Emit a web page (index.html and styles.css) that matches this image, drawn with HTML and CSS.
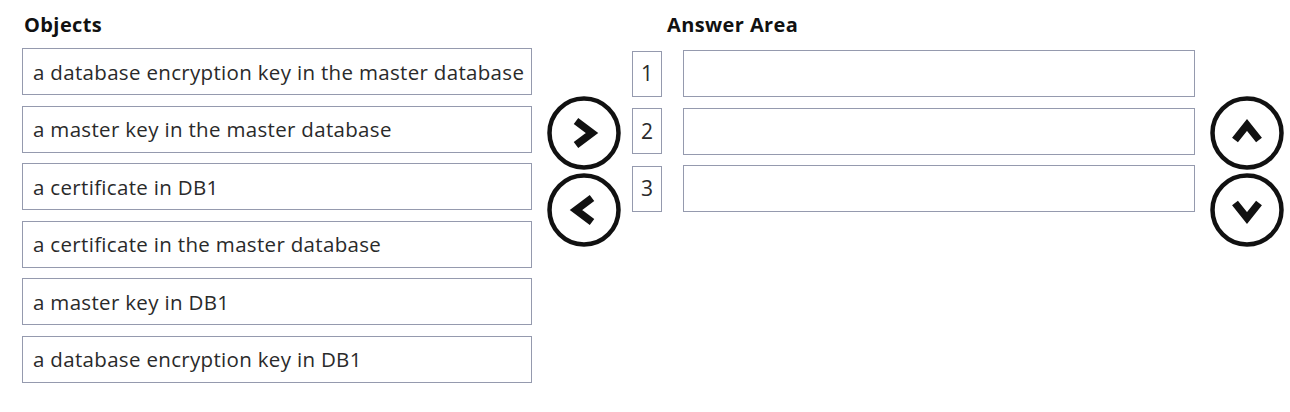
FILE: index.html
```html
<!DOCTYPE html>
<html lang="en">
<head>
<meta charset="utf-8">
<title>Answer Area</title>
<link rel="stylesheet" href="styles.css">
</head>
<body>
<div class="quiz">
  <section class="objects">
    <h2 class="title">Objects</h2>
    <ul class="list">
      <li class="item">a database encryption key in the master database</li>
      <li class="item">a master key in the master database</li>
      <li class="item">a certificate in DB1</li>
      <li class="item">a certificate in the master database</li>
      <li class="item">a master key in DB1</li>
      <li class="item">a database encryption key in DB1</li>
    </ul>
  </section>

  <div class="controls move">
    <button class="round" type="button" aria-label="Move right">
      <svg viewBox="0 0 74 74" width="74" height="74"><circle cx="37" cy="37" r="34.5"/><polyline points="29,25 45,37 29,49"/></svg>
    </button>
    <button class="round" type="button" aria-label="Move left">
      <svg viewBox="0 0 74 74" width="74" height="74"><circle cx="37" cy="37" r="34.5"/><polyline points="45,25 29,37 45,49"/></svg>
    </button>
  </div>

  <section class="answer">
    <h2 class="title answer-title">Answer Area</h2>
    <ol class="slots">
      <li class="slot"><span class="num">1</span><div class="field"></div></li>
      <li class="slot"><span class="num">2</span><div class="field"></div></li>
      <li class="slot"><span class="num">3</span><div class="field"></div></li>
    </ol>
  </section>

  <div class="controls order">
    <button class="round" type="button" aria-label="Move up">
      <svg viewBox="0 0 74 74" width="74" height="74"><circle cx="37" cy="37" r="34.5"/><polyline points="25,44 37,29 49,44"/></svg>
    </button>
    <button class="round" type="button" aria-label="Move down">
      <svg viewBox="0 0 74 74" width="74" height="74"><circle cx="37" cy="37" r="34.5"/><polyline points="25,30 37,45 49,30"/></svg>
    </button>
  </div>
</div>
</body>
</html>
```

FILE: styles.css
```css
html, body {
  margin: 0;
  padding: 0;
  background: #ffffff;
}

body {
  font-family: "Open Sans", "Noto Sans", "Liberation Sans", sans-serif;
  color: #262626;
}

.quiz {
  display: flex;
  align-items: flex-start;
  padding: 12px 0 0 22px;
}

.title {
  margin: 0 0 0 2px;
  height: 36px;
  font-size: 20px;
  line-height: 26px;
  font-weight: 700;
  color: #111111;
  letter-spacing: 0.4px;
}

/* left column: draggable items */
.objects {
  width: 510px;
}

.list {
  list-style: none;
  margin: 0;
  padding: 0;
  display: flex;
  flex-direction: column;
  gap: 10.5px;
}

.item {
  box-sizing: border-box;
  height: 47px;
  display: flex;
  align-items: center;
  padding: 0 0 0 10px;
  border: 1px solid #959aae;
  font-size: 20.5px;
  letter-spacing: 0.32px;
  color: #2a2a2a;
  white-space: nowrap;
}

/* round arrow buttons */
.controls {
  display: flex;
  flex-direction: column;
  gap: 3px;
  margin-top: 84px;
}

.move {
  margin-left: 15px;
}

.order {
  margin-left: 15px;
}

.round {
  display: block;
  width: 74px;
  height: 74px;
  padding: 0;
  border: 0;
  background: none;
}

.round svg {
  display: block;
}

.round circle {
  fill: #ffffff;
  stroke: #111111;
  stroke-width: 4.5;
}

.round polyline {
  fill: none;
  stroke: #111111;
  stroke-width: 7.5;
  stroke-linejoin: miter;
  stroke-linecap: butt;
}

/* right column: ordered answer slots */
.answer {
  margin-left: 11px;
}

.answer-title {
  margin-left: 35px;
}

.slots {
  list-style: none;
  margin: 2px 0 0;
  padding: 0;
  display: flex;
  flex-direction: column;
  gap: 10.5px;
}

.slot {
  display: flex;
  align-items: center;
  gap: 21px;
}

.num {
  box-sizing: border-box;
  width: 30px;
  height: 46px;
  display: flex;
  align-items: center;
  justify-content: center;
  border: 1px solid #959aae;
  font-size: 21px;
  color: #2a2a2a;
  padding-bottom: 1px;
}

.field {
  box-sizing: border-box;
  width: 512px;
  height: 47px;
  border: 1px solid #959aae;
}
```
